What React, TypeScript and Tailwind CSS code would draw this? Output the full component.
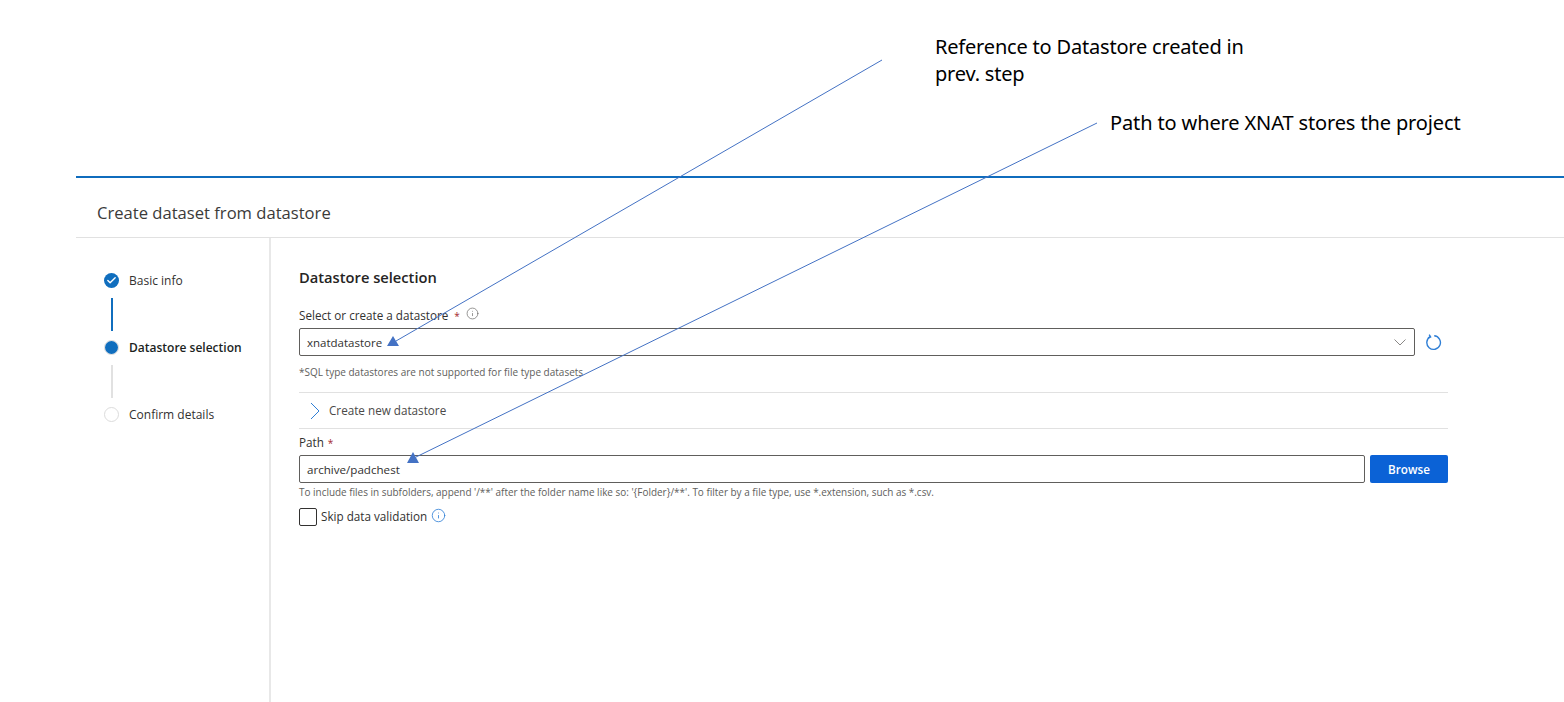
import { Check, Info } from "lucide-react";

const ui = "font-['Open_Sans','Noto_Sans',sans-serif]";

function Step(props: { label: string; state: "done" | "current" | "todo" }) {
  const { label, state } = props;
  return (
    <div className="flex h-4 items-center">
      {state === "done" ? (
        <span className="flex h-[15px] w-[15px] items-center justify-center rounded-full bg-[#106ebe]">
          <Check size={11} strokeWidth={3} className="text-white" />
        </span>
      ) : state === "current" ? (
        <span className="flex h-[15px] w-[15px] items-center justify-center rounded-full border border-[#d8d8d8] bg-white">
          <span className="h-[13px] w-[13px] rounded-full bg-[#106ebe]" />
        </span>
      ) : (
        <span className="h-[15px] w-[15px] rounded-full border border-[#dcdcdc] bg-white" />
      )}
      <span className={`ml-[10px] pt-[1px] text-[12px] ${state === "current" ? "font-semibold text-[#201f1e]" : "text-[#323130]"}`}>
        {label}
      </span>
    </div>
  );
}

function Arrows() {
  return (
    <svg className="pointer-events-none absolute left-0 top-0" width="1564" height="702" aria-hidden>
      <line x1="882" y1="60" x2="396" y2="341" stroke="#4472c4" strokeWidth="1" />
      <polygon points="387,346 399,346 393,336" fill="#4472c4" />
      <line x1="1097" y1="123" x2="416" y2="457" stroke="#4472c4" strokeWidth="1" />
      <polygon points="407,463 419,463 413,452" fill="#4472c4" />
    </svg>
  );
}

export default function App() {
  return (
    <div className={`relative h-[702px] w-[1564px] overflow-hidden bg-white ${ui}`}>
      <div className="h-[176px]" />
      <div className="ml-[76px] flex h-[526px] flex-col border-t-2 border-[#0f6cbd]">
        <div className="flex h-[60px] items-center border-b border-[#e1e1e1] pl-[21px] pt-[11px] text-[16.6px] text-[#3b3a39]">
          Create dataset from datastore
        </div>
        <div className="flex min-h-0 flex-1">
          <aside className="w-[195px] shrink-0 border-r-2 border-[#e8e8e8] pl-[28px] pt-[34px]">
            <Step label="Basic info" state="done" />
            <div className="mb-[8px] ml-[7px] mt-[10px] h-[33px] w-[2px] bg-[#106ebe]" />
            <Step label="Datastore selection" state="current" />
            <div className="mb-[8px] ml-[7px] mt-[10px] h-[33px] w-[2px] bg-[#e1e1e1]" />
            <Step label="Confirm details" state="todo" />
          </aside>
          <main className="w-[1177px] shrink-0 pl-[28px] pt-[29px]">
            <h2 className="text-[14.7px] font-semibold leading-5 text-[#252423]">Datastore selection</h2>
            <div className="mt-[19px] flex h-[20px] items-center text-[11.7px] font-medium text-[#323130]">
              Select or create a datastore
              <span className="ml-[6px] text-[10px] text-[#a4262c]">*</span>
              <Info size={13} strokeWidth={1.2} className="mb-[6px] ml-[6px] text-[#605e5c]" />
            </div>
            <div className="mt-[2px] flex items-center">
              <div className="flex h-[28px] w-[1116px] items-center justify-between rounded-[2px] border border-[#605e5c] pl-[7px] pr-[8px] text-[11.5px] text-[#323130]">
                <span className="pt-[1px]">xnatdatastore</span>
                <svg width="12" height="7" viewBox="0 0 12 7" fill="none" stroke="#8a8886" strokeWidth="1">
                  <path d="M.5.5 6 6 11.5.5" />
                </svg>
              </div>
              <svg width="17" height="17" viewBox="0 0 17 17" fill="none" stroke="#2f7fd6" strokeWidth="1.4" className="ml-[10px]">
                <path d="M5.2 2.7a6.8 6.8 0 1 0 4-.9" />
                <path d="M4.2 .6 5.6 3 3 4.2" />
              </svg>
            </div>
            <p className="mt-[9px] h-[14px] text-[10px] leading-[14px] text-[#605e5c]">
              *SQL type datastores are not supported for file type datasets
            </p>
            <div className="mt-[13px] flex h-[37px] w-[1149px] items-center border-y border-[#e1e1e1] pl-[11px] text-[11.7px] text-[#4a4948]">
              <svg width="10" height="18" viewBox="0 0 10 18" fill="none" stroke="#2f7fd6" strokeWidth="1">
                <path d="M1 1l8 8-8 8" />
              </svg>
              <span className="ml-[9px]">Create new datastore</span>
            </div>
            <div className="mt-[6px] flex h-[16px] items-center text-[11.7px] font-medium text-[#323130]">
              Path<span className="ml-[4px] text-[10px] text-[#a4262c]">*</span>
            </div>
            <div className="mt-[4px] flex w-[1149px] items-center justify-between">
              <div className="flex h-[28px] w-[1066px] items-center rounded-[2px] border border-[#605e5c] pl-[7px] pt-[1px] text-[11.6px] text-[#323130]">
                archive/padchest
              </div>
              <button className="flex h-[28px] w-[78px] items-center justify-center rounded-[2px] bg-[#0b62d6] pt-[1px] text-[11.7px] font-semibold text-white">
                Browse
              </button>
            </div>
            <p className="mt-[3px] h-[13px] text-[9.95px] leading-[13px] text-[#605e5c]">
              To include files in subfolders, append '/**' after the folder name like so: '{"{"}Folder{"}"}/**'. To filter by a file type, use *.extension, such as *.csv.
            </p>
            <div className="mt-[9px] flex items-center">
              <span className="h-[18px] w-[18px] rounded-[2px] border border-[#323130]" />
              <span className="ml-[4px] text-[11.7px] text-[#323130]">Skip data validation</span>
              <Info size={15} strokeWidth={1.3} className="mb-[3px] ml-[4px] text-[#2f7fd6]" />
            </div>
          </main>
        </div>
      </div>
      <Arrows />
      <div className="absolute left-[935px] top-[33px] w-[330px] font-['Noto_Sans',sans-serif] text-[20px] leading-[27px] tracking-[-0.19px] text-black">
        Reference to Datastore created in
        <br />
        prev. step
      </div>
      <div className="absolute left-[1110px] top-[109px] font-['Noto_Sans',sans-serif] text-[20px] leading-[27px] tracking-[-0.13px] text-black">
        Path to where XNAT stores the project
      </div>
    </div>
  );
}
